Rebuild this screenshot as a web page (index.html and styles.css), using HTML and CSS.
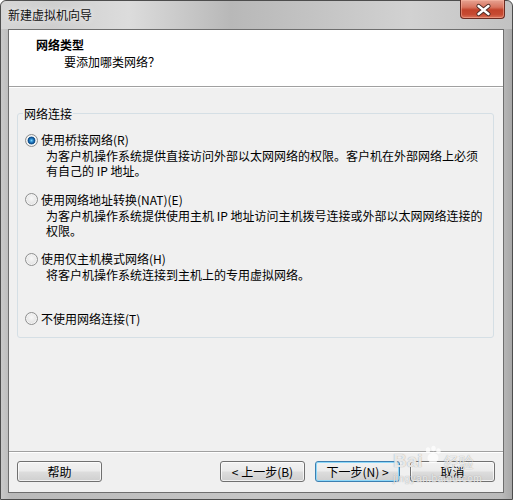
FILE: index.html
```html
<!DOCTYPE html>
<html lang="zh-CN">
<head>
    <meta charset="UTF-8">
    <title>新建虚拟机向导</title>
    <link rel="stylesheet" href="styles.css">
</head>
<body>
    <div class="window">
        <div class="titlebar">
            <span class="title">新建虚拟机向导</span>
            <div class="close">
                <svg width="45" height="19" viewBox="0 0 45 19">
                    <path d="M18.5 6 L28.5 14 M28.5 6 L18.5 14" stroke="#4a2a24" stroke-width="4.2" stroke-linecap="round"/>
                    <path d="M18.5 6 L28.5 14 M28.5 6 L18.5 14" stroke="#ffffff" stroke-width="2.4" stroke-linecap="round"/>
                </svg>
            </div>
        </div>

        <div class="client">
            <div class="header">
                <div class="header-title">网络类型</div>
                <div class="header-sub">要添加哪类网络？</div>
            </div>

            <div class="body">
                <fieldset class="group">
                    <legend>网络连接</legend>

                    <div class="option">
                        <label class="option-label"><span class="radio checked"></span>使用桥接网络(R)</label>
                        <p class="option-desc">为客户机操作系统提供直接访问外部以太网网络的权限。客户机在外部网络上必须<br>有自己的 IP 地址。</p>
                    </div>

                    <div class="option">
                        <label class="option-label"><span class="radio"></span>使用网络地址转换(NAT)(E)</label>
                        <p class="option-desc">为客户机操作系统提供使用主机 IP 地址访问主机拨号连接或外部以太网网络连接的<br>权限。</p>
                    </div>

                    <div class="option">
                        <label class="option-label"><span class="radio"></span>使用仅主机模式网络(H)</label>
                        <p class="option-desc">将客户机操作系统连接到主机上的专用虚拟网络。</p>
                    </div>

                    <div class="option last">
                        <label class="option-label"><span class="radio"></span>不使用网络连接(T)</label>
                    </div>
                </fieldset>
            </div>

            <div class="footer">
                <button class="btn">帮助</button>
                <span class="spacer"></span>
                <button class="btn">&lt; 上一步(B)</button>
                <button class="btn default">下一步(N) &gt;</button>
                <button class="btn">取消</button>
            </div>
        </div>

        <!-- watermark from the source screenshot -->
        <div class="watermark">
            <div class="wm-logo">
                <span>Bai</span>
                <svg width="20" height="20" viewBox="0 0 20 20">
                    <ellipse cx="5" cy="5" rx="2.2" ry="2.8" fill="rgba(255,255,255,0.75)"/>
                    <ellipse cx="10.5" cy="3.5" rx="2.2" ry="2.8" fill="rgba(255,255,255,0.75)"/>
                    <ellipse cx="15.5" cy="6" rx="2.2" ry="2.8" fill="rgba(255,255,255,0.75)"/>
                    <ellipse cx="10" cy="13" rx="5.5" ry="5" fill="rgba(255,255,255,0.75)"/>
                </svg>
                <span class="wm-cn">经验</span>
            </div>
            <div class="wm-url">jingyan.baidu.com</div>
        </div>
    </div>
</body>
</html>
```

FILE: styles.css
```css
* {
    box-sizing: border-box;
}

body {
    margin: 0;
    padding: 0;
    font-family: "Noto Sans CJK SC", "Liberation Sans", sans-serif;
    font-size: 12px;
    color: #000;
    background: #fff;
}

.window {
    position: relative;
    width: 513px;
    height: 500px;
    display: flex;
    flex-direction: column;
    padding: 0 8px 6px 7px;
    border: 1px solid #4d4d4d;
    border-radius: 6px 6px 0 0;
    background: linear-gradient(to right, #c9c9c9, #b9b9b9 2%, #c6c6c6 50%, #bababa 98%, #a8a8a8);
}

.titlebar {
    height: 28px;
    display: flex;
    justify-content: space-between;
    align-items: flex-start;
    margin: 0 -8px 0 -7px;
    padding: 0 7px 0 7px;
    background: linear-gradient(to right, #d6d6d6 0%, #cfcfcf 10%, #dcdcdc 25%, #b8b8b8 45%, #c4c4c4 62%, #d2d2d2 80%, #c2c2c2 100%);
    border-radius: 6px 6px 0 0;
}

.title {
    line-height: 28px;
    padding-left: 0;
    color: #111;
    text-shadow: 0 0 6px rgba(255, 255, 255, 0.9);
}

.close {
    width: 45px;
    height: 19px;
    margin-top: -1px;
    border: 1px solid #6b2b21;
    border-top: none;
    border-radius: 0 0 4px 4px;
    background: linear-gradient(#e6a392 0%, #d8745f 40%, #c2432b 55%, #c64a31 80%, #d9735b 100%);
    box-shadow: inset 0 0 0 1px rgba(255, 190, 170, 0.45);
}

.close svg {
    display: block;
    margin-left: -1px;
}

.client {
    flex: 1;
    display: flex;
    flex-direction: column;
    border: 1px solid #6e6e6e;
    background: #f0f0f0;
}

.header {
    height: 57px;
    background: #fff;
    border-bottom: 1px solid #a0a0a0;
    padding: 7px 0 0 27px;
}

.header-title {
    font-weight: bold;
    line-height: 16px;
}

.header-sub {
    line-height: 16px;
    margin-top: 1px;
    margin-left: 28px;
}

.body {
    flex: 1;
    padding-top: 18px;
    border-top: 1px solid #fff;
}

.group {
    margin: 0 9px 0 8px;
    padding: 11px 0 10px 0;
    border: 1px solid #d5dfe5;
    border-radius: 3px;
}

.group legend {
    margin-left: 5px;
    padding: 0 1px;
    line-height: 15px;
}

.option {
    height: 59.67px;
}

.option.last {
    height: auto;
}

.option-label {
    display: flex;
    align-items: center;
    height: 16px;
    line-height: 16px;
    padding-left: 7px;
}

.radio {
    width: 13px;
    height: 13px;
    margin-right: 3px;
    border-radius: 50%;
    border: 1px solid #8e8f8f;
    background: radial-gradient(circle at 50% 40%, #f8f8f8, #d9d9d9);
    box-shadow: inset 0 0 0 1px #f4f4f4;
}

.radio.checked {
    background: radial-gradient(circle closest-side at 50% 50%, #7fd3f7 0, #2a8ad0 1.6px, #12508f 3px, #1d5e96 3.6px, #f6f6f6 4.3px, #dcdcdc 100%);
}

.option-desc {
    margin: 0 0 0 28px;
    line-height: 15px;
}

.footer {
    display: flex;
    align-items: center;
    border-top: 1px solid #a0a0a0;
    box-shadow: inset 0 1px 0 #fff;
    padding: 9px 8px 10px 8px;
}

.spacer {
    flex: 1;
}

.btn {
    width: 85px;
    height: 21px;
    margin-left: 10px;
    padding: 0;
    font-family: inherit;
    font-size: 12px;
    color: #000;
    border: 1px solid #707070;
    border-radius: 3px;
    background: linear-gradient(#f2f2f2 0%, #ebebeb 48%, #dddddd 52%, #cfcfcf 100%);
    box-shadow: inset 0 0 0 1px rgba(255, 255, 255, 0.7);
}

.btn:first-child {
    margin-left: 0;
}

.btn.default {
    border-color: #3c7fb1;
    box-shadow: inset 0 0 0 1px #8ed8f9;
}

.watermark {
    position: absolute;
    left: 392px;
    top: 442px;
    color: rgba(255, 255, 255, 0.8);
    text-shadow: 0 0 1px rgba(120, 120, 120, 0.8);
    pointer-events: none;
}

.wm-logo {
    display: flex;
    align-items: flex-end;
    height: 28px;
    font-family: "Liberation Sans", sans-serif;
    font-size: 19px;
    font-weight: bold;
    line-height: 20px;
}

.wm-logo svg {
    margin: 0 1px 6px 0;
}

.wm-cn {
    font-family: "Noto Sans CJK SC", sans-serif;
    font-size: 15px;
    font-weight: normal;
    line-height: 18px;
}

.wm-url {
    margin-top: 3px;
    font-family: "Liberation Sans", sans-serif;
    font-size: 10px;
    line-height: 10px;
    letter-spacing: 0.5px;
}
```
